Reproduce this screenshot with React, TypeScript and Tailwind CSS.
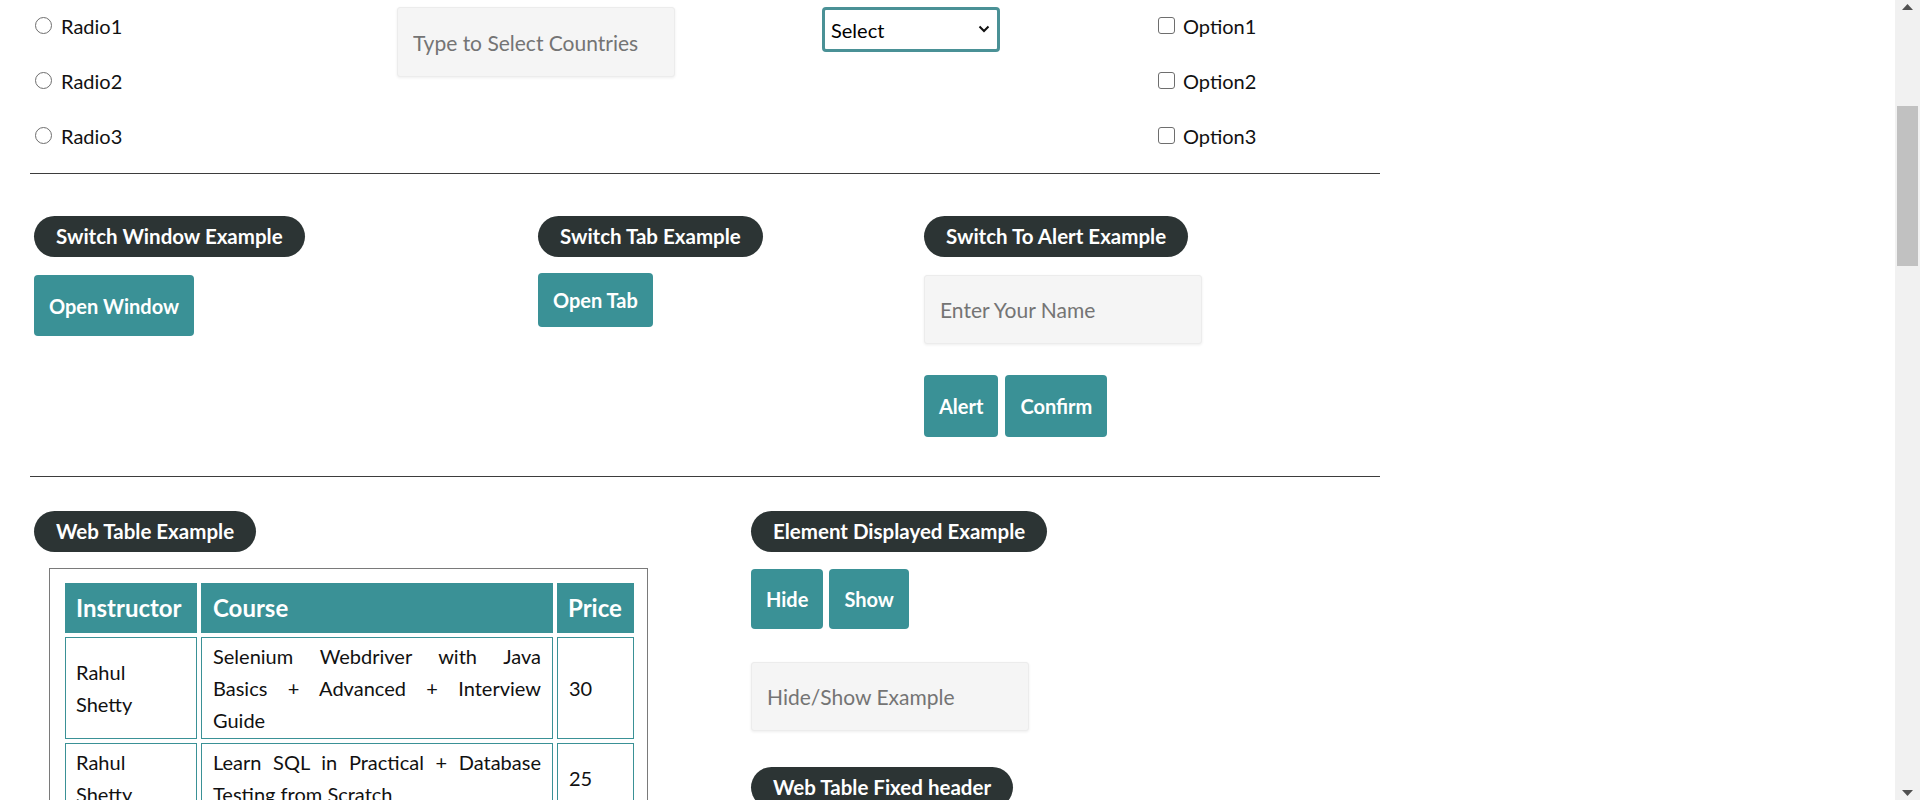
import React from "react";

const TEAL = "bg-[#3a9196]";

function Pill({ children }: { children: React.ReactNode }) {
  return (
    <div className="inline-flex h-[41px] items-center rounded-full bg-[#2c3434] px-[22px] text-[20.5px] font-bold text-white">
      {children}
    </div>
  );
}

function Btn({ children, h }: { children: React.ReactNode; h: string }) {
  return (
    <button className={`${h} rounded-[4px] bg-[#3a9196] px-[15px] text-[20px] font-bold text-white`}>
      {children}
    </button>
  );
}

function Radio({ label }: { label: string }) {
  return (
    <div className="flex h-[55px] items-center gap-[9px]">
      <span className="h-[17px] w-[17px] rounded-full border border-[#6e6e6e] bg-white" />
      <span>{label}</span>
    </div>
  );
}

function Check({ label }: { label: string }) {
  return (
    <div className="flex h-[55px] items-center gap-[8px]">
      <span className="h-[17px] w-[17px] rounded-[3px] border border-[#6e6e6e] bg-white" />
      <span>{label}</span>
    </div>
  );
}

function TextInput({ placeholder, w }: { placeholder: string; w: string }) {
  return (
    <input
      readOnly
      placeholder={placeholder}
      className={`${w} rounded-[3px] border border-[#ececec] bg-[#f5f5f5] px-[15px] text-[21px] text-[#333] shadow-[0_1px_3px_rgba(0,0,0,0.07)] outline-none placeholder:text-[#747474]`}
    />
  );
}

function JLine({ children, last }: { children: React.ReactNode; last?: boolean }) {
  return (
    <span className={last ? "block text-left" : "block text-justify [text-align-last:justify]"}>
      {children}
    </span>
  );
}

function Scrollbar() {
  return (
    <div className="relative h-[800px] w-[25px] shrink-0 bg-[#f1f1f1]">
      <svg className="absolute left-[7px] top-[4px]" width="11" height="6" viewBox="0 0 11 6">
        <polygon points="0,6 5.5,0 11,6" fill="#505050" />
      </svg>
      <div className="absolute left-[2px] top-[106px] h-[160px] w-[21px] bg-[#c1c1c1]" />
      <svg className="absolute bottom-[4px] left-[7px]" width="11" height="6" viewBox="0 0 11 6">
        <polygon points="0,0 11,0 5.5,6" fill="#505050" />
      </svg>
    </div>
  );
}

export default function App() {
  const cellB = "border border-[#3a9196]";
  return (
    <div className="flex h-[800px] w-[1920px] overflow-hidden bg-white text-[20px] text-[#111] [font-family:Lato,'Open_Sans',sans-serif]">
      <div className="min-w-0 flex-1">
        <div className="ml-[30px] w-[1350px]">
          {/* Section 1 */}
          <div className="flex h-[173px]">
            <div className="-mt-[2px] flex w-[367px] flex-col pl-[5px]">
              <Radio label="Radio1" />
              <Radio label="Radio2" />
              <Radio label="Radio3" />
            </div>
            <div className="w-[425px] pt-[7px]">
              <TextInput placeholder="Type to Select Countries" w="h-[70px] w-[278px]" />
            </div>
            <div className="w-[336px] pt-[7px]">
              <div className="relative h-[45px] w-[178px] rounded-[4px] border-[3px] border-[#4a9196] bg-white">
                <div className="flex h-full items-center pl-[6px] text-[20px] text-black">Select</div>
                <svg
                  className="absolute right-[7px] top-[15px]"
                  width="12"
                  height="8"
                  viewBox="0 0 12 8"
                  fill="none"
                  stroke="#111"
                  strokeWidth="2"
                >
                  <polyline points="1.5,1.5 6,6 10.5,1.5" />
                </svg>
              </div>
            </div>
            <div className="-mt-[2px] flex flex-col">
              <Check label="Option1" />
              <Check label="Option2" />
              <Check label="Option3" />
            </div>
          </div>
          <div className="h-px bg-[#3d3d3d]" />

          {/* Section 2 */}
          <div className="flex h-[302px] pt-[42px]">
            <div className="ml-[4px] flex w-[504px] flex-col items-start">
              <Pill>Switch Window Example</Pill>
              <div className="mt-[18px]">
                <Btn h="h-[61px]">Open Window</Btn>
              </div>
            </div>
            <div className="flex w-[386px] flex-col items-start">
              <Pill>Switch Tab Example</Pill>
              <div className="mt-[16px]">
                <Btn h="h-[54px]">Open Tab</Btn>
              </div>
            </div>
            <div className="flex flex-col items-start">
              <Pill>Switch To Alert Example</Pill>
              <div className="mt-[18px]">
                <TextInput placeholder="Enter Your Name" w="h-[69px] w-[278px]" />
              </div>
              <div className="mt-[31px] flex gap-[7px]">
                <Btn h="h-[62px]">Alert</Btn>
                <Btn h="h-[62px]">Confirm</Btn>
              </div>
            </div>
          </div>
          <div className="h-px bg-[#3d3d3d]" />

          {/* Section 3 */}
          <div className="flex pt-[34px]">
            <div className="ml-[4px] flex w-[717px] flex-col items-start">
              <Pill>Web Table Example</Pill>
              <div className="ml-[15px] mt-[16px] w-[599px] border border-[#7a7a7a] pb-[14px] pl-[15px] pt-[14px]">
                <div className="grid grid-cols-[132px_352px_77px] gap-[4px]">
                  <div className={`${TEAL} ${cellB} flex h-[50px] items-center px-[10px] text-[24px] font-bold text-white`}>
                    Instructor
                  </div>
                  <div className={`${TEAL} ${cellB} flex h-[50px] items-center px-[11px] text-[24px] font-bold text-white`}>
                    Course
                  </div>
                  <div className={`${TEAL} ${cellB} flex h-[50px] items-center px-[10px] text-[24px] font-bold text-white`}>
                    Price
                  </div>

                  <div className={`${cellB} flex items-center px-[10px] leading-[32px]`}>
                    <span>
                      Rahul
                      <br />
                      Shetty
                    </span>
                  </div>
                  <div className={`${cellB} px-[11px] py-[2px] leading-[32px]`}>
                    <JLine>Selenium Webdriver with Java</JLine>
                    <JLine>Basics + Advanced + Interview</JLine>
                    <JLine last>Guide</JLine>
                  </div>
                  <div className={`${cellB} flex items-center px-[11px] leading-[32px]`}>30</div>

                  <div className={`${cellB} flex items-center px-[10px] leading-[32px]`}>
                    <span>
                      Rahul
                      <br />
                      Shetty
                    </span>
                  </div>
                  <div className={`${cellB} px-[11px] py-[2px] leading-[32px]`}>
                    <JLine>Learn SQL in Practical + Database</JLine>
                    <JLine last>Testing from Scratch</JLine>
                  </div>
                  <div className={`${cellB} flex items-center px-[11px] leading-[32px]`}>25</div>

                  <div className={`${cellB} flex items-center px-[10px] leading-[32px]`}>
                    <span>
                      Rahul
                      <br />
                      Shetty
                    </span>
                  </div>
                  <div className={`${cellB} px-[11px] py-[2px] leading-[32px]`}>
                    <JLine>Appium (Selenium) - Mobile</JLine>
                    <JLine last>Automation Testing from Scratch</JLine>
                  </div>
                  <div className={`${cellB} flex items-center px-[11px] leading-[32px]`}>30</div>
                </div>
              </div>
            </div>
            <div className="flex flex-col items-start">
              <Pill>Element Displayed Example</Pill>
              <div className="mt-[17px] flex gap-[6px]">
                <Btn h="h-[60px]">Hide</Btn>
                <Btn h="h-[60px]">Show</Btn>
              </div>
              <div className="mt-[33px]">
                <TextInput placeholder="Hide/Show Example" w="h-[69px] w-[278px]" />
              </div>
              <div className="mt-[36px]">
                <Pill>Web Table Fixed header</Pill>
              </div>
            </div>
          </div>
        </div>
      </div>
      <Scrollbar />
    </div>
  );
}
